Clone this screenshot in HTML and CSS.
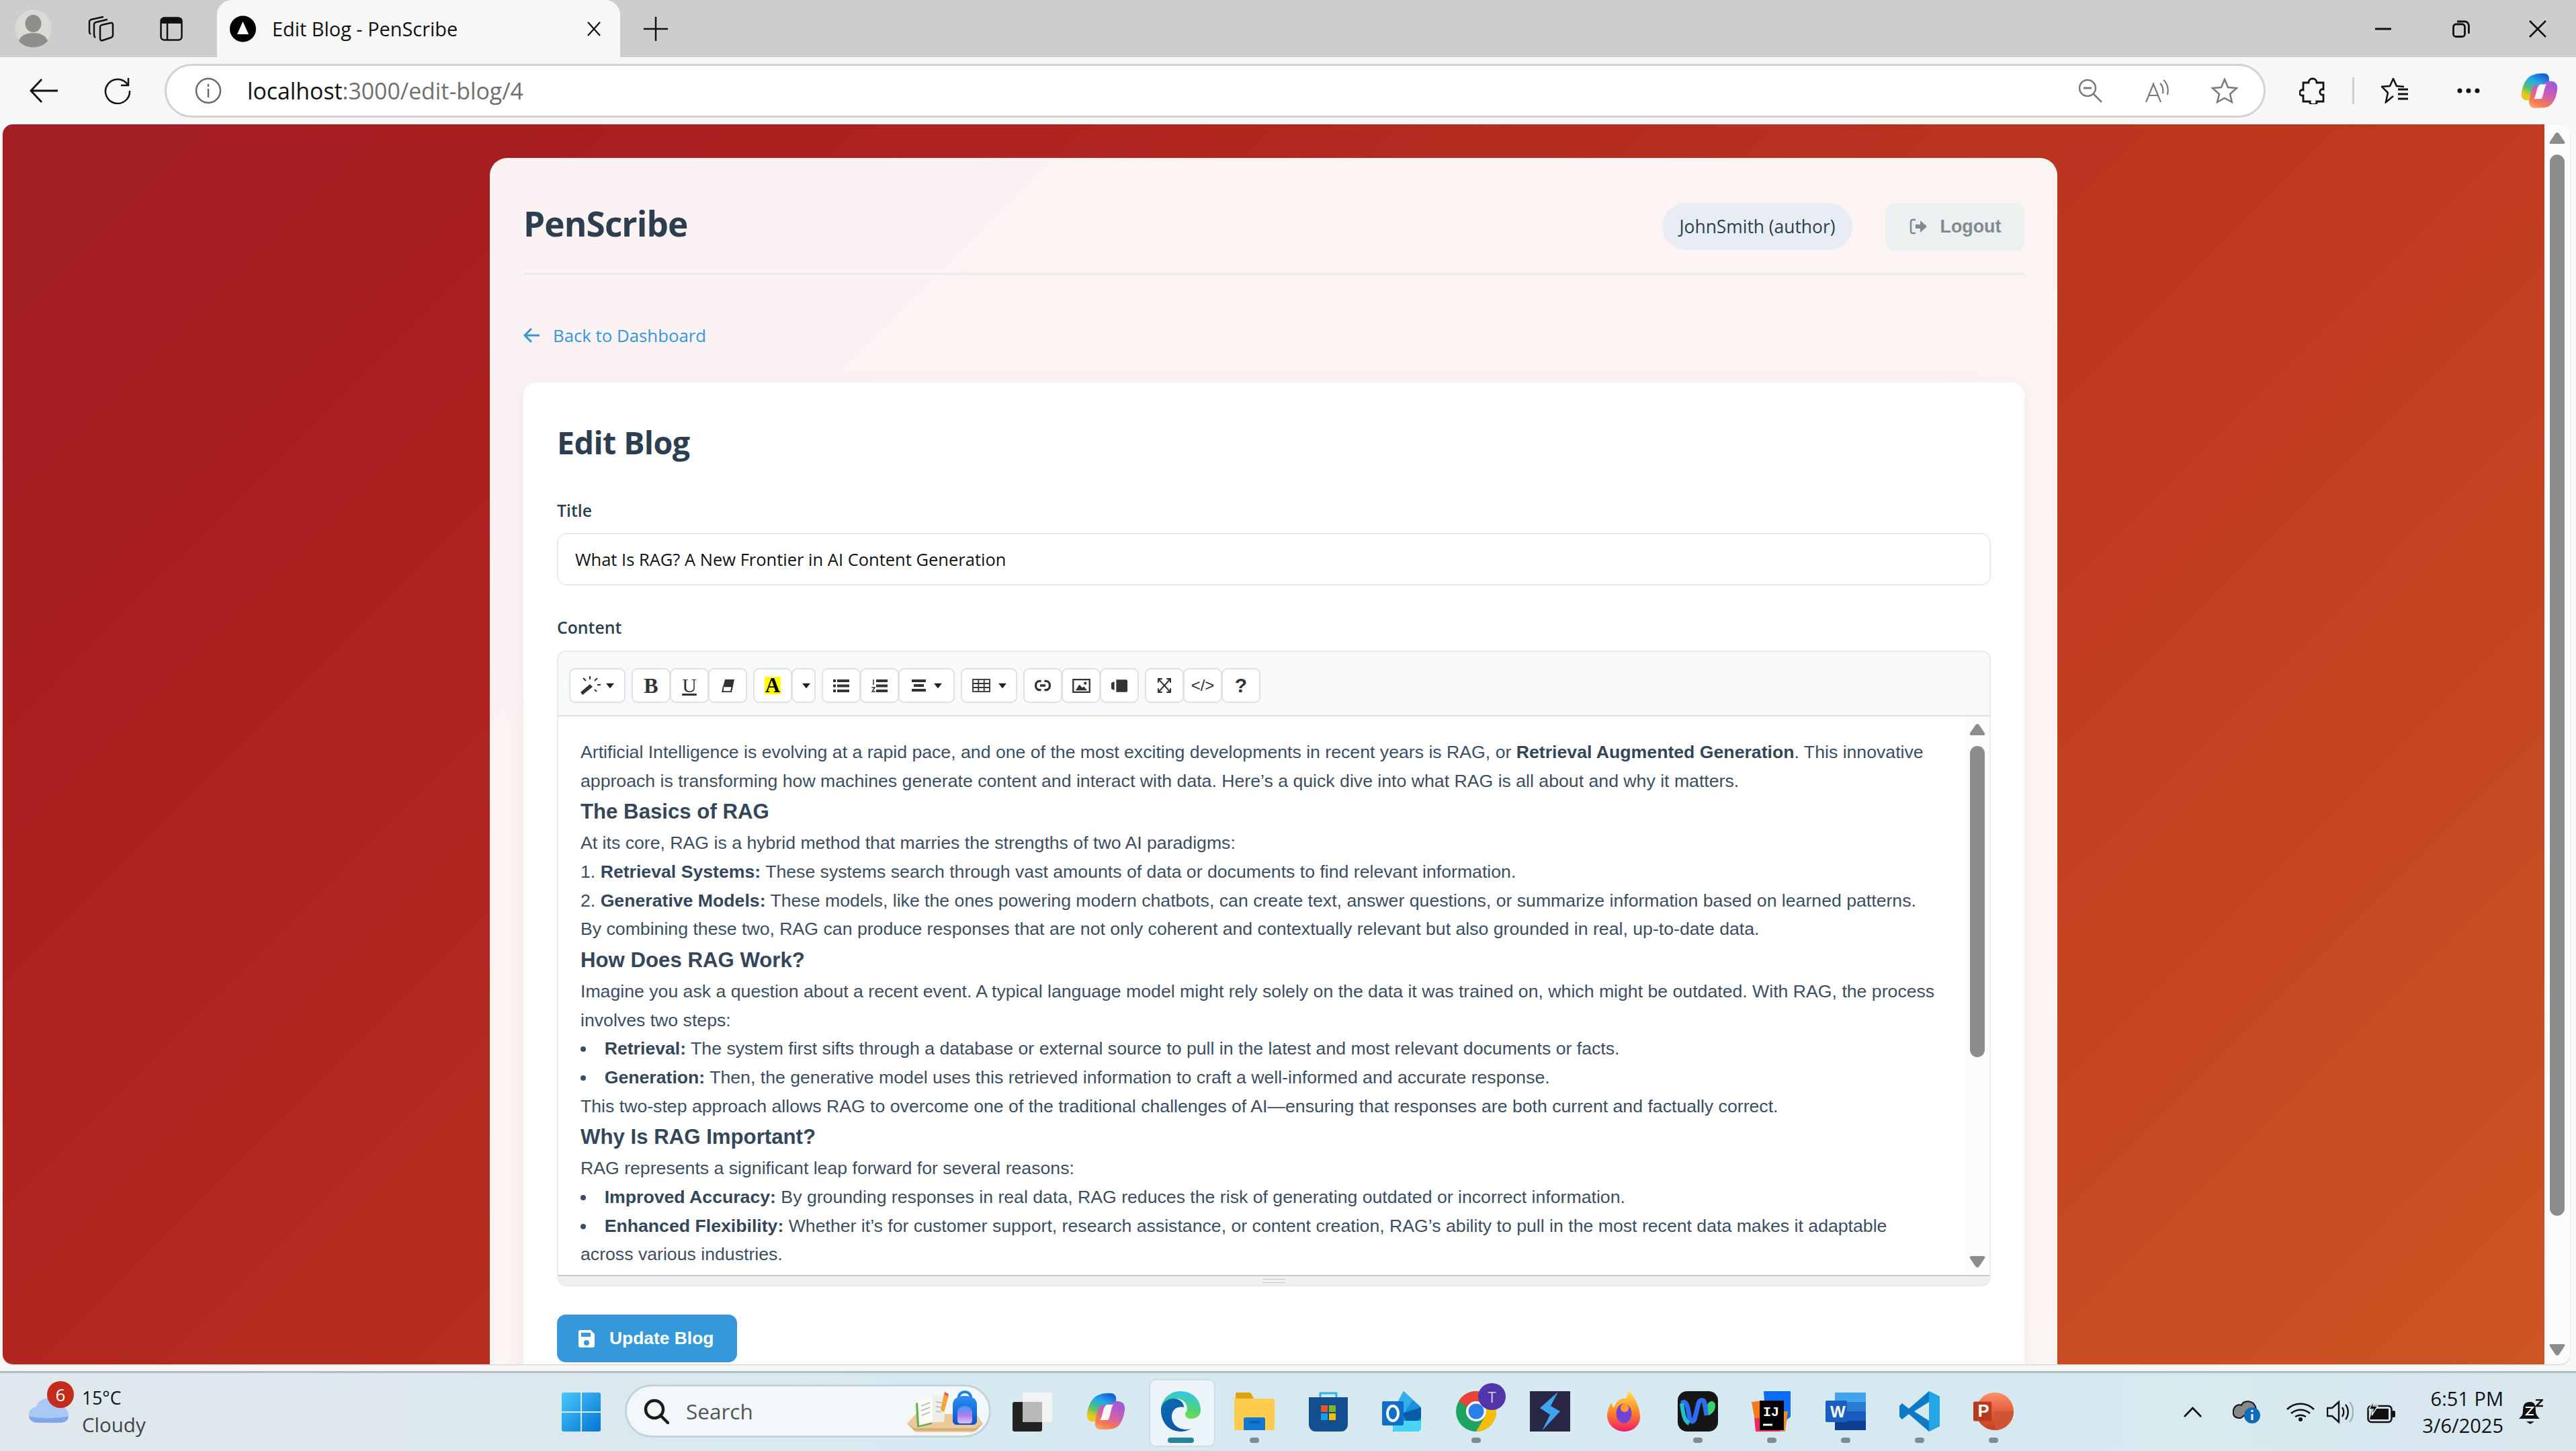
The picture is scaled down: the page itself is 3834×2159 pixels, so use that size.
FILE: index.html
```html
<!DOCTYPE html>
<html lang="en">
<head>
<meta charset="utf-8">
<title>Edit Blog - PenScribe</title>
<link rel="stylesheet" href="styles.css">
</head>
<body>
<svg class="defs" width="0" height="0" aria-hidden="true">
  <defs>
    <linearGradient id="cpA" x1="0.7" y1="0" x2="0.2" y2="1"><stop offset="0" stop-color="#1b5fd6"/><stop offset=".3" stop-color="#1fa9ea"/><stop offset=".62" stop-color="#58c26a"/><stop offset=".85" stop-color="#e8c81c"/><stop offset="1" stop-color="#e8c81c"/></linearGradient>
    <linearGradient id="cpB" x1="0.7" y1="0" x2="0.2" y2="1"><stop offset="0" stop-color="#9b5bd8"/><stop offset=".45" stop-color="#d05fb0"/><stop offset=".8" stop-color="#f57a50"/><stop offset="1" stop-color="#f8a060"/></linearGradient>
    <linearGradient id="edgeA" x1="0.8" y1="0.1" x2="0.6" y2="1"><stop offset="0" stop-color="#38c6e0"/><stop offset=".6" stop-color="#4cd277"/><stop offset="1" stop-color="#7bdc4a"/></linearGradient>
    <linearGradient id="edgeB" x1="0" y1="0" x2="1" y2="1"><stop offset="0" stop-color="#0b6db8"/><stop offset="1" stop-color="#0f4e9c"/></linearGradient>
    <linearGradient id="winG" x1="0" y1="0" x2="1" y2="1"><stop offset="0" stop-color="#46c8f8"/><stop offset="1" stop-color="#0574d4"/></linearGradient>
    <linearGradient id="fireG" x1="0.5" y1="0" x2="0.5" y2="1"><stop offset="0" stop-color="#ffe14a"/><stop offset=".5" stop-color="#ff8a26"/><stop offset="1" stop-color="#ee1d6a"/></linearGradient>
    <linearGradient id="ppG" x1="0" y1="0" x2="0" y2="1"><stop offset="0" stop-color="#ff8f6b"/><stop offset=".5" stop-color="#e0603a"/><stop offset="1" stop-color="#c4401f"/></linearGradient>
    <linearGradient id="packG" x1="0" y1="0" x2="0" y2="1"><stop offset="0" stop-color="#2b8cf2"/><stop offset="1" stop-color="#0a55c8"/></linearGradient>
    <linearGradient id="pocketG" x1="0" y1="0" x2="0" y2="1"><stop offset="0" stop-color="#3f9ef5"/><stop offset=".55" stop-color="#b07cf0"/><stop offset="1" stop-color="#e3c4f8"/></linearGradient>
    <symbol id="copilot" viewBox="0 0 60 54">
      <path d="M36 0c7 0 9 5 8 13l-4 19c-1 7-4 10-9 10H8c-5 0-8-5-7-12C3 18 8 5 20 2c5-2 10-2 16-2z" fill="url(#cpA)"/>
      <path d="M46 12c8 0 12 5 11 13-2 14-7 26-18 28-5 1-12 1-18 1-6 0-9-5-8-12l3-14c1-7 5-10 10-10 7-1 14-6 20-6z" fill="url(#cpB)"/>
      <path d="M30 17h10c-4 5-4 18-8 23H20c5-5 3-18 10-23z" fill="#f7f7f7"/>
    </symbol>
    <symbol id="tri-up" viewBox="0 0 24 18"><path d="M12 1c1 0 2 1 3 2l8 12c1 2 0 3-2 3H3c-2 0-3-1-2-3L9 3c1-1 2-2 3-2z" fill="#8c8c8c"/></symbol>
    <symbol id="tri-down" viewBox="0 0 24 18"><path d="M12 17c1 0 2-1 3-2l8-12c1-2 0-3-2-3H3C1 0 0 1 1 3l8 12c1 1 2 2 3 2z" fill="#8c8c8c"/></symbol>
    <symbol id="caret" viewBox="0 0 16 12"><path d="M0 1h16L8 11z" fill="#222"/></symbol>
  </defs>
</svg>

<div class="screen">
  <header class="tabbar">
    <svg class="ic-profile" viewBox="0 0 55 57"><ellipse cx="27.500" cy="28.500" rx="27" ry="28" fill="#dbdbd6"/><ellipse cx="27.500" cy="21" rx="12" ry="13" fill="#908e8b"/><path d="M6 47c3-9 12-12 21.500-12S46 38 49 47c-5 6-13 9.500-21.500 9.500S11 53 6 47z" fill="#908e8b"/></svg>
    <svg class="ic-coll" viewBox="0 0 40 40" fill="none" stroke="#111" stroke-width="2.500"><path d="M24 2 6 6c-3 .7-3 2-3 4v14c0 2 .5 3 2 4"/><path d="M30 6 13 10c-3 .7-3 2-3 4v15c0 2 .5 3 2 4"/><path d="M35 11 22 14c-3 .7-3 2-3 4v16c0 3 1.500 4 4 3l12-4c2-.7 3-2 3-4V14c0-2-1-3.500-3-3z"/></svg>
    <svg class="ic-tabs" viewBox="0 0 34 36"><rect x="1.500" y="1.500" width="31" height="33" rx="5" fill="none" stroke="#111" stroke-width="2.500"/><path d="M1.500 7c0-3 2-5.500 5-5.500h21c3 0 5 2.500 5 5.500v3h-31z" fill="#111"/><path d="M11 10v24" stroke="#111" stroke-width="2.500"/></svg>
    <div class="tab">
      <svg class="ic-fav" viewBox="0 0 39 40"><circle cx="19.500" cy="20" r="19.500" fill="#000"/><path d="M19.500 9 28 28H11z" fill="#fff"/></svg>
      <span class="tab-title">Edit Blog - PenScribe</span>
      <svg class="ic-x" viewBox="0 0 22 22"><path d="M2 1l18 20M20 1 2 21" stroke="#111" stroke-width="2.200"/></svg>
    </div>
    <svg class="ic-plus" viewBox="0 0 36 36"><path d="M18 0v36M0 18h36" stroke="#111" stroke-width="2.500"/></svg>
    <div class="winctrl">
      <svg class="ic-min" viewBox="0 0 24 4"><path d="M0 2h24" stroke="#111" stroke-width="3"/></svg>
      <svg class="ic-rest" viewBox="0 0 26 26" fill="none" stroke="#111" stroke-width="2.800"><rect x="1.500" y="6" width="17" height="18.500" rx="4"/><path d="M7 2h11c4 0 6.500 3 6.500 7v11"/></svg>
      <svg class="ic-close" viewBox="0 0 26 26"><path d="M1 1l24 24M25 1 1 25" stroke="#111" stroke-width="2.500"/></svg>
    </div>
  </header>

  <nav class="toolbar">
    <svg class="ic-back" viewBox="0 0 42 36" fill="none" stroke="#111" stroke-width="2.800"><path d="M42 18H2M18 1 2 18l16 17"/></svg>
    <svg class="ic-reload" viewBox="0 0 40 40" fill="none" stroke="#111" stroke-width="2.500"><path d="M35 11A18 18 0 1 0 38 20"/><path d="M36 1v11H25"/></svg>
    <div class="address">
      <svg class="ic-info" viewBox="0 0 40 40" fill="none" stroke="#6b6b6b" stroke-width="2.500"><circle cx="20" cy="20" r="18"/><path d="M20 17v13M20 10v4"/></svg>
      <span class="url"><span class="url-host">localhost</span>:3000/edit-blog/4</span>
      <div class="addr-right">
        <svg class="ic-zoom" viewBox="0 0 36 36" fill="none" stroke="#7a7a7a" stroke-width="2.500"><circle cx="14" cy="14" r="12"/><path d="M23 23l12 12"/><path d="M8 14h12" stroke-width="3"/></svg>
        <svg class="ic-read" viewBox="0 0 38 36" fill="none" stroke="#7a7a7a" stroke-width="2.200"><path d="M1 35 12 8l11 27M5 25h14"/><path d="M22 7c4 3 5 10 4 15M27 2c6 5 8 14 6 22"/></svg>
        <svg class="ic-star" viewBox="0 0 40 38" fill="none" stroke="#7a7a7a" stroke-width="2.500"><path d="M20 2l5 12 13 1-10 9 3 12-11-6-11 6 3-12-10-9 13-1z"/></svg>
      </div>
    </div>
    <svg class="ic-puzzle" viewBox="0 0 38 40" fill="none" stroke="#111" stroke-width="2.800"><path d="M14 8c0-8 12-8 12 0h10v10c-7-2-7 10 0 8v10H26c2 6-12 6-10 0H6V27c-7 2-7-10 0-8V8z"/></svg>
    <div class="tb-divider"></div>
    <svg class="ic-favs" viewBox="0 0 40 38" fill="none" stroke="#111" stroke-width="2.500"><path d="M34 13l-11-1-5-11-5 11-12 1 9 9-3 14 11-9"/><path d="M25 17h15M25 24h15M25 31h15" stroke-width="3"/></svg>
    <svg class="ic-dots" viewBox="0 0 34 8"><circle cx="4" cy="4" r="3.500" fill="#111"/><circle cx="17" cy="4" r="3.500" fill="#111"/><circle cx="30" cy="4" r="3.500" fill="#111"/></svg>
    <svg class="ic-copilot"><use href="#copilot"/></svg>
  </nav>

  <div class="viewport">
    <div class="frame">
      <main class="page">
        <section class="card">
          <header class="app-header">
            <h1 class="brand">PenScribe</h1>
            <div class="user-nav">
              <span class="pill">JohnSmith (author)</span>
              <button class="logout" type="button">
                <svg class="ic-logout" viewBox="0 0 26 26"><path d="M9 3H5C3 3 2 4 2 6v14c0 2 1 3 3 3h4" fill="none" stroke="#7f8c8d" stroke-width="2.500"/><path d="M9 10h7V4l10 9-10 9v-6H9z" fill="#7f8c8d"/></svg>
                <span>Logout</span>
              </button>
            </div>
          </header>

          <a class="back" href="#">
            <svg class="ic-arrow" viewBox="0 0 24 22" fill="none" stroke="#3498db" stroke-width="3"><path d="M24 11H3M12 1 2 11l10 10"/></svg>
            <span>Back to Dashboard</span>
          </a>

          <div class="panel">
            <h2 class="panel-title">Edit Blog</h2>
            <label class="field-label first">Title</label>
            <div class="input">What Is RAG? A New Frontier in AI Content Generation</div>
            <label class="field-label second">Content</label>

            <div class="editor">
              <div class="ed-toolbar">
                <div class="btn-group">
                  <div class="tbtn wide">
                    <svg class="ti ti-wand" viewBox="0 0 30 28"><path d="M0 24 14 12l4 4L3 28z" fill="#333"/><path d="M14 0v5M4 3l4 4M25 3l-4 4M25 13h5M24 23l-3-3" stroke="#333" stroke-width="2" fill="none"/></svg>
                    <svg class="caret"><use href="#caret"/></svg>
                  </div>
                </div>
                <div class="btn-group">
                  <div class="tbtn glyph">B</div>
                  <div class="tbtn glyph under">U</div>
                  <div class="tbtn"><svg class="ti ti-eraser" viewBox="0 0 19 19"><path d="M5 0h14l-4 19H0z" fill="#333"/><path d="M2.500 10.500h13l-1.800 7.500H2z" fill="#fff" stroke="#333" stroke-width="1.500"/></svg></div>
                </div>
                <div class="btn-group">
                  <div class="tbtn"><span class="hilite">A</span></div>
                  <div class="tbtn narrow"><svg class="caret"><use href="#caret"/></svg></div>
                </div>
                <div class="btn-group">
                  <div class="tbtn"><svg class="ti ti-list" viewBox="0 0 24 19"><path d="M0 0h4v4H0zM6 0h18v4H6zM0 7.500h4v4H0zM6 7.500h18v4H6zM0 15h4v4H0zM6 15h18v4H6z" fill="#333"/></svg></div>
                  <div class="tbtn"><svg class="ti ti-list" viewBox="0 0 24 19"><path d="M7 0h17v4H7zM7 7.500h17v4H7zM7 15h17v4H7z" fill="#333"/><path d="M3 0v8M.5 12h4.500L1 18h5" stroke="#333" stroke-width="1.500" fill="none"/></svg></div>
                  <div class="tbtn wide spaced"><svg class="ti ti-align" viewBox="0 0 21 18"><path d="M0 0h21v4H0zM3 7h15v4H3zM0 14h21v4H0z" fill="#333"/></svg><svg class="caret"><use href="#caret"/></svg></div>
                </div>
                <div class="btn-group">
                  <div class="tbtn wide spaced"><svg class="ti ti-table" viewBox="0 0 27 20" fill="none" stroke="#333" stroke-width="1.800"><rect x="1" y="1" width="25" height="18"/><path d="M9.300 1v18M17.700 1v18M1 7h25M1 13h25"/></svg><svg class="caret"><use href="#caret"/></svg></div>
                </div>
                <div class="btn-group">
                  <div class="tbtn"><svg class="ti ti-link" viewBox="0 0 28 22" fill="none" stroke="#333" stroke-width="4"><path d="M11 3H8C-1 3-1 19 8 19h3M17 3h3c9 0 9 16 0 16h-3M9 11h10"/></svg></div>
                  <div class="tbtn"><svg class="ti ti-pic" viewBox="0 0 28 22"><rect x="1.200" y="1.200" width="25.600" height="19.600" fill="none" stroke="#333" stroke-width="2.400"/><path d="M5 18l6-9 4 5 3-2 5 6z" fill="#333"/><circle cx="20" cy="7" r="2.200" fill="#333"/></svg></div>
                  <div class="tbtn"><svg class="ti ti-vid" viewBox="0 0 26 20"><path d="M8 0h16c1 0 2 1 2 2v16c0 1-1 2-2 2H8zM0 5l5-2v14l-5-2z" fill="#333"/></svg></div>
                </div>
                <div class="btn-group">
                  <div class="tbtn"><svg class="ti ti-full" viewBox="0 0 24 26" fill="none" stroke="#333" stroke-width="2.500"><path d="M2 2l20 22M22 2 2 24"/><path d="M1 8V1h7M16 1h7v7M1 18v7h7M16 25h7v-7" stroke-width="2.800"/></svg></div>
                  <div class="tbtn glyph code">&lt;/&gt;</div>
                  <div class="tbtn glyph help">?</div>
                </div>
              </div>

              <div class="ed-body">
                <div class="ed-text">
                  <p>Artificial Intelligence is evolving at a rapid pace, and one of the most exciting developments in recent years is RAG, or <strong>Retrieval Augmented Generation</strong>. This innovative approach is transforming how machines generate content and interact with data. Here’s a quick dive into what RAG is all about and why it matters.</p>
                  <h3>The Basics of RAG</h3>
                  <p>At its core, RAG is a hybrid method that marries the strengths of two AI paradigms:</p>
                  <p>1. <strong>Retrieval Systems:</strong> These systems search through vast amounts of data or documents to find relevant information.</p>
                  <p>2. <strong>Generative Models:</strong> These models, like the ones powering modern chatbots, can create text, answer questions, or summarize information based on learned patterns.</p>
                  <p>By combining these two, RAG can produce responses that are not only coherent and contextually relevant but also grounded in real, up-to-date data.</p>
                  <h3>How Does RAG Work?</h3>
                  <p>Imagine you ask a question about a recent event. A typical language model might rely solely on the data it was trained on, which might be outdated. With RAG, the process involves two steps:</p>
                  <ul>
                    <li><strong>Retrieval:</strong> The system first sifts through a database or external source to pull in the latest and most relevant documents or facts.</li>
                    <li><strong>Generation:</strong> Then, the generative model uses this retrieved information to craft a well-informed and accurate response.</li>
                  </ul>
                  <p>This two-step approach allows RAG to overcome one of the traditional challenges of AI—ensuring that responses are both current and factually correct.</p>
                  <h3>Why Is RAG Important?</h3>
                  <p>RAG represents a significant leap forward for several reasons:</p>
                  <ul>
                    <li><strong>Improved Accuracy:</strong> By grounding responses in real data, RAG reduces the risk of generating outdated or incorrect information.</li>
                    <li><strong>Enhanced Flexibility:</strong> Whether it’s for customer support, research assistance, or content creation, RAG’s ability to pull in the most recent data makes it adaptable across various industries.</li>
                  </ul>
                </div>
                <div class="ed-scroll">
                  <svg class="arrow"><use href="#tri-up"/></svg>
                  <div class="ed-thumb"></div>
                  <svg class="arrow push"><use href="#tri-down"/></svg>
                </div>
              </div>
              <div class="ed-status"><span class="grip"></span></div>
            </div>

            <button class="submit" type="button">
              <svg class="ic-save" viewBox="0 0 24 26"><path d="M3 0h15l6 6v17c0 2-1 3-3 3H3c-2 0-3-1-3-3V3c0-2 1-3 3-3zm1 4v6h14V4zm8 11a4 4 0 1 0 0 8 4 4 0 0 0 0-8z" fill="#fff" fill-rule="evenodd"/></svg>
              <span>Update Blog</span>
            </button>
          </div>
        </section>
      </main>
      <aside class="page-scroll">
        <svg class="arrow"><use href="#tri-up"/></svg>
        <div class="page-thumb"></div>
        <svg class="arrow push"><use href="#tri-down"/></svg>
      </aside>
    </div>
  </div>

  <footer class="taskbar">
    <div class="weather">
      <svg class="ic-cloud" viewBox="0 0 59 37"><path d="M14 37C5 37 0 32 0 25s5-11 11-12C13 5 22 0 31 0c10 0 18 6 20 14 5 2 8 6 8 11 0 7-5 12-13 12z" fill="#a9c8f4"/><path d="M14 37C5 37 0 32 0 27c10 4 46 4 59 0 0 6-5 10-13 10z" fill="#7ea8ea"/></svg>
      <span class="badge">6</span>
      <div class="w-text"><span class="w-temp">15°C</span><span class="w-desc">Cloudy</span></div>
    </div>
    <svg class="ic-win" viewBox="0 0 58 58"><g fill="url(#winG)"><path d="M3 0h25v28H0V3c0-2 1-3 3-3zM30 0h25c2 0 3 1 3 3v25H30zM0 30h28v28H3c-2 0-3-1-3-3zM30 30h28v25c0 2-1 3-3 3H30z"/></g></svg>
    <div class="search">
      <svg class="ic-search" viewBox="0 0 38 38" fill="none" stroke="#1c1c1c" stroke-width="4.500"><circle cx="16" cy="16" r="13"/><path d="M25 25l11 11" stroke-linecap="round"/></svg>
      <span class="search-text">Search</span>
      <svg class="ic-book" viewBox="0 0 115 63">
        <path d="M1 50 14 36h90l10 14-11 11-3 2H14l-2-2z" fill="#ecc99b"/>
        <path d="M12 61l-11-11 11 7h90l12-7-11 11z" fill="#d8ae78"/>
        <path d="M14 20 38 13v38L16 56z" fill="#62b04f"/>
        <path d="M17 18 39 8v40L19 53z" fill="#fbfbf6"/>
        <path d="M39 8l20 2-3 38-17 0z" fill="#eeeeea"/>
        <path d="M22 24l13-5M22 31l13-5M23 38l12-5M44 18l9 1M44 25l9 1M44 32l8 1" stroke="#b5b5b5" stroke-width="1.500"/>
        <path d="M56 6l7 3-7 24-5-3z" fill="#f5a33a"/>
        <path d="M57 3l6 3-1 4-6-3z" fill="#f06050"/>
        <path d="M78 12c0-12 18-12 18 0" fill="none" stroke="#1f7fe8" stroke-width="4"/>
        <path d="M69 22c0-8 7-13 18-13s18 5 18 13v24c0 4-3 6-7 6H76c-4 0-7-2-7-6z" fill="url(#packG)"/>
        <path d="M76 34c0-6 5-10 11-10s11 4 11 10v12c0 2-2 4-4 4H80c-2 0-4-2-4-4z" fill="url(#pocketG)"/>
      </svg>
    </div>
    <div class="apps">
      <div class="app">
        <span class="app-ic"><svg viewBox="0 0 60 60"><rect x="0" y="16" width="44" height="44" rx="3" fill="#222"/><rect x="15" y="2" width="44" height="44" rx="3" fill="#f4f4f4" fill-opacity=".92"/><rect x="15" y="16" width="29" height="30" fill="#b9b9b9"/></svg></span>
      </div>
      <div class="app">
        <span class="app-ic"><svg><use href="#copilot"/></svg></span>
      </div>
      <div class="app current">
        <span class="app-ic"><svg viewBox="0 0 60 60"><path d="M30 0c17 0 30 12 30 28 0 9-7 13-14 13-6 0-9-3-9-7 0-3 3-3 3-8 0-9-8-16-18-15C10 12 2 22 1 26 3 10 15 0 30 0z" fill="url(#edgeA)"/><path d="M1 26c1-9 10-15 19-15 9 0 15 6 15 13-10-2-18 3-18 14 0 10 8 19 22 19 3 0 6-1 8-2-6 4-12 5-17 5C13 60 0 46 1 26z" fill="url(#edgeB)"/></svg></span>
        <span class="ind active"></span>
      </div>
      <div class="app">
        <span class="app-ic"><svg viewBox="0 0 60 56"><path d="M2 2c0-1 1-2 2-2h18c2 0 3 1 4 3l3 6H2z" fill="#e2a10e"/><path d="M0 9h57c2 0 3 1 3 3v42c0 1-1 2-2 2H2c-1 0-2-1-2-2z" fill="#ffcc4d"/><path d="M14 40c0-2 1-3 3-3h26c2 0 3 1 3 3v16H14z" fill="#1177cf"/><path d="M22 44h16" stroke="#0c5fa8" stroke-width="3"/></svg></span>
        <span class="ind"></span>
      </div>
      <div class="app">
        <span class="app-ic"><svg viewBox="0 0 58 60"><path d="M17 11V3h24v8" fill="none" stroke="#2fb3e6" stroke-width="3"/><path d="M0 9h58v40c0 6-4 11-10 11H10C4 60 0 55 0 49z" fill="#134f8f"/><rect x="18" y="21" width="10" height="10" fill="#e8552c"/><rect x="30" y="21" width="10" height="10" fill="#7db727"/><rect x="18" y="33" width="10" height="10" fill="#13a0e5"/><rect x="30" y="33" width="10" height="10" fill="#ffbb0c"/></svg></span>
      </div>
      <div class="app">
        <span class="app-ic"><svg viewBox="0 0 60 60"><path d="M32 0l26 24v30c0 3-3 6-6 6H16V30z" fill="#1a8fdb"/><path d="M32 0l14 13-14 20-16-3z" fill="#2fb0ea"/><path d="M58 24v16L40 52 30 33z" fill="#0a5ca8"/><path d="M16 44h42v10c0 3-3 6-6 6H19c-2 0-3-1-3-3z" fill="#48d5f5"/><rect x="0" y="15" width="32" height="36" rx="2" fill="#0f6fc6"/><ellipse cx="16" cy="33" rx="8" ry="11" fill="none" stroke="#fff" stroke-width="4"/></svg></span>
      </div>
      <div class="app">
        <span class="app-ic chrome"><svg viewBox="0 0 60 60"><circle cx="30" cy="30" r="30" fill="#1ea362"/><path d="M30 0a30 30 0 0 1 26 15H30a15 15 0 0 0-13 8L4 15A30 30 0 0 1 30 0z" fill="#ea4335"/><path d="M56 15a30 30 0 0 1-26 45l13-22a15 15 0 0 0 0-15z" fill="#fbbc04"/><circle cx="30" cy="30" r="15" fill="#fff"/><circle cx="30" cy="30" r="11.500" fill="#2b7de9"/></svg>
          <span class="teams">T</span>
        </span>
        <span class="ind"></span>
      </div>
      <div class="app">
        <span class="app-ic"><svg viewBox="0 0 60 60"><rect width="60" height="60" fill="#2a2646"/><path d="M42 1 15 25l15 10-12 24 27-29-14-8z" fill="#3fa3ee"/></svg></span>
      </div>
      <div class="app">
        <span class="app-ic"><svg viewBox="0 0 56 58"><path d="M36 0c8 10 14 22 15 34 2 14-9 24-23 24S2 46 4 32c1-6 3-12 6-16 0 4 2 6 4 8 2-10 10-14 18-14 0-4 1-7 4-10z" fill="url(#fireG)"/><ellipse cx="28" cy="32" rx="11" ry="14" fill="#7542d4"/><circle cx="29" cy="24" r="6" fill="#ff9a2a"/></svg></span>
      </div>
      <div class="app">
        <span class="app-ic"><svg viewBox="0 0 60 60"><rect width="60" height="60" rx="14" fill="#161616"/><path d="M6 18c6-6 9 4 11 18 1 8 5 12 8 6l6-24c2-6 8-6 9 0l3 18" fill="none" stroke="#2d6ef5" stroke-width="7"/><path d="M6 18c2 14 3 26 11 30" fill="none" stroke="#22c1c9" stroke-width="6"/><path d="M44 20c4-8 12-6 12 2s-6 12-10 14z" fill="#37d16e"/></svg></span>
        <span class="ind"></span>
      </div>
      <div class="app">
        <span class="app-ic"><svg viewBox="0 0 60 60"><path d="M0 16 16 14v46H8z" fill="#f97a14"/><path d="M18 0h40v38L36 56H22z" fill="#0a6cf2"/><path d="M4 40h28L44 60H6z" fill="#f3275f"/><path d="M44 30h10l-4 30H44z" fill="#f98c14"/><rect x="12" y="14" width="36" height="44" fill="#000"/><text class="ij" x="17" y="37">IJ</text><path d="M17 50h14" stroke="#fff" stroke-width="3"/></svg></span>
        <span class="ind"></span>
      </div>
      <div class="app">
        <span class="app-ic"><svg viewBox="0 0 60 56"><rect x="14" y="0" width="46" height="14" fill="#41a5ee"/><rect x="14" y="14" width="46" height="14" fill="#2b7cd3"/><rect x="14" y="28" width="46" height="14" fill="#185abd"/><rect x="14" y="42" width="46" height="14" fill="#103f91"/><rect x="0" y="12" width="32" height="32" rx="2" fill="#1a5fc0"/><text class="wd" x="7" y="37">W</text></svg></span>
        <span class="ind"></span>
      </div>
      <div class="app">
        <span class="app-ic"><svg viewBox="0 0 60 60"><path d="M44 0l16 8v44L44 60 14 34 4 42 0 38V22l4-4 10 8z" fill="#0e79c4"/><path d="M44 0l16 8v44L44 60z" fill="#23a5ea"/><path d="M44 16 22 30l22 14z" fill="#d7e9f0"/></svg></span>
        <span class="ind"></span>
      </div>
      <div class="app">
        <span class="app-ic"><svg viewBox="0 0 62 58"><circle cx="33" cy="29" r="29" fill="url(#ppG)"/><path d="M33 29h29c0 16-13 29-29 29z" fill="#cf5434"/><rect x="0" y="14" width="28" height="30" rx="2" fill="#b83c1c"/><text class="pp" x="7" y="37">P</text></svg></span>
        <span class="ind"></span>
      </div>
    </div>
    <div class="tray">
      <svg class="t-caret" viewBox="0 0 27 16" fill="none" stroke="#111" stroke-width="2.600"><path d="M1 15 13.500 2 26 15"/></svg>
      <svg class="t-cloud" viewBox="0 0 42 36"><path d="M9 27C2 26 0 22 1 16 2 8 10 6 13 8c3-8 17-8 21 2 1 3 1 6 1 8H24L12 27z" fill="#888" stroke="#111" stroke-width="2"/><circle cx="29" cy="23" r="12" fill="#0f6cbd"/><path d="M29 21v9M29 15v3" stroke="#fff" stroke-width="3"/></svg>
      <svg class="t-wifi" viewBox="0 0 42 28" fill="none" stroke="#111" stroke-width="2.600"><path d="M1 10C12-1 30-1 41 10M7 16c8-7 20-7 28 0M13 21c5-3 11-3 16 0"/><circle cx="21" cy="25" r="3" fill="#111" stroke="none"/></svg>
      <svg class="t-vol" viewBox="0 0 40 36" fill="none" stroke="#111" stroke-width="2.400"><path d="M1 12h7L18 3v30L8 24H1zM23 11c3 4 3 10 0 14M28 7c5 6 5 16 0 22"/><path d="M34 3c7 8 7 22 0 30" stroke="#9fb1bb"/></svg>
      <svg class="t-batt" viewBox="0 0 42 34"><rect x="1.500" y="8" width="35" height="24" rx="5" fill="none" stroke="#111" stroke-width="2.500"/><path d="M8 12h24v16H4z" fill="#111"/><rect x="37" y="15" width="5" height="10" rx="2" fill="#111"/><path d="M10 0 3 13h6l-2 9 9-14H9z" fill="#111" stroke="#d7e9f0" stroke-width="1.500"/></svg>
      <div class="clock"><span>6:51 PM</span><span>3/6/2025</span></div>
      <svg class="t-bell" viewBox="0 0 37 38"><path d="M18 4C8 4 7 10 7 18c0 5-2 7-6 11h31c-4-4-6-7-6-11 0-8-1-14-8-14z" fill="#111"/><path d="M12 33h12l-6 4z" fill="#111"/><path d="M11 12h11l-10 11h11" fill="none" stroke="#fff" stroke-width="2"/><path d="M26 1h10l-9 9h10" fill="none" stroke="#111" stroke-width="2.500"/></svg>
    </div>
  </footer>
</div>
</body>
</html>
```
FILE: styles.css
```css
* { box-sizing: border-box; }
html, body { margin: 0; padding: 0; height: 100%; overflow: hidden; }
body { font-family: "Open Sans", "Noto Sans", sans-serif; color: #111; background: #f7f7f7; }
svg { display: block; flex: none; }
.defs { position: absolute; }
.screen { width: 3834px; height: 2159px; display: flex; flex-direction: column; overflow: hidden; }

/* ---------- browser chrome ---------- */
.tabbar { height: 85px; background: #cdcdcd; display: flex; align-items: center; flex: none; }
.ic-profile { width: 55px; height: 57px; margin-left: 22px; }
.ic-coll { width: 40px; height: 40px; margin-left: 53px; }
.ic-tabs { width: 34px; height: 36px; margin-left: 68px; }
.tab { width: 600px; height: 85px; margin-left: 51px; background: #f7f7f7; border-radius: 22px 22px 0 0; display: flex; align-items: center; padding: 0 28px 0 19px; }
.ic-fav { width: 39px; height: 40px; }
.tab-title { font-size: 28.900px; margin-left: 24px; color: #111; flex: 1; white-space: nowrap; }
.ic-x { width: 22px; height: 22px; }
.ic-plus { width: 36px; height: 36px; margin-left: 35px; }
.winctrl { margin-left: auto; display: flex; align-items: center; padding-right: 44px; }
.ic-min { width: 24px; height: 4px; }
.ic-rest { width: 26px; height: 26px; margin-left: 91px; }
.ic-close { width: 26px; height: 26px; margin-left: 88px; }

.toolbar { height: 100px; background: #f7f7f7; display: flex; align-items: center; flex: none; }
.ic-back { width: 42px; height: 36px; margin-left: 44px; }
.ic-reload { width: 40px; height: 40px; margin-left: 69px; }
.address { width: 3127px; height: 80px; margin-left: 50px; background: #fff; border: 3px solid #d2d2d2; border-radius: 40px; display: flex; align-items: center; padding: 0 38px 0 42px; }
.ic-info { width: 40px; height: 40px; }
.url { font-size: 33.800px; margin-left: 38px; color: #6f6f6f; }
.url-host { color: #111; }
.addr-right { margin-left: auto; display: flex; align-items: center; }
.ic-zoom { width: 36px; height: 36px; }
.ic-read { width: 38px; height: 36px; margin-left: 64px; }
.ic-star { width: 40px; height: 38px; margin-left: 60px; }
.ic-puzzle { width: 38px; height: 40px; margin-left: 50px; }
.tb-divider { width: 3px; height: 40px; background: #cfcfcf; margin-left: 41px; }
.ic-favs { width: 40px; height: 38px; margin-left: 40px; }
.ic-dots { width: 34px; height: 8px; margin-left: 73px; }
.ic-copilot { width: 57px; height: 52px; margin-left: 61px; }

/* ---------- viewport ---------- */
.viewport { height: 1855px; flex: none; padding: 0 9px 10px 4px; background: #f7f7f7; }
.frame { height: 1845px; display: flex; border-radius: 15px; overflow: hidden; box-shadow: 0 1px 2px rgba(0,0,0,.18); }
.page { flex: 1; min-width: 0; overflow: hidden; padding-top: 50px; background: linear-gradient(135deg, #a21f24 0%, #ab1f1f 20%, #c13c20 68%, #cc5523 100%); }
.page-scroll { width: 38px; flex: none; background: #fbfbfb; display: flex; flex-direction: column; align-items: center; padding: 11px 0 12px; }
.arrow { width: 24px; height: 18px; }
.arrow.push { margin-top: auto; }
.page-thumb { width: 22px; height: 1579px; margin-top: 16px; border-radius: 11px; background: #8c8c8c; }

.card { width: 2333px; margin: 0 auto; padding: 67px 49px 100px 50px; background: rgba(255,255,255,.95); border-radius: 26px 26px 0 0; }
.app-header { height: 107px; padding-bottom: 34px; border-bottom: 3px solid #ececec; display: flex; align-items: center; justify-content: space-between; }
.brand { margin: -11px 0 0; font-size: 51.300px; font-weight: 700; color: #2c3e50; letter-spacing: -.9px; line-height: 60px; }
.user-nav { display: flex; align-items: center; gap: 50px; }
.pill { width: 283px; height: 70px; border-radius: 35px; background: #e8ecf3; color: #2c3e50; font-size: 26.400px; display: flex; align-items: center; justify-content: center; white-space: nowrap; }
.logout { width: 206px; height: 71px; border: 0; border-radius: 14px; background: #ecf0f1; color: #7f8c8d; font: 700 26.800px "Liberation Sans", sans-serif; display: flex; align-items: center; justify-content: center; gap: 20px; padding: 0; }
.ic-logout { width: 26px; height: 26px; }

.back { margin-top: 70px; height: 40px; display: flex; align-items: center; color: #3498db; text-decoration: none; font-size: 25.800px; }
.ic-arrow { width: 24px; height: 22px; margin-right: 20px; }

.panel { margin-top: 50px; background: #fff; border-radius: 20px; padding: 64px 50px 120px; box-shadow: 0 4px 30px rgba(0,0,0,.05); }
.panel-title { margin: 0; height: 50px; font-size: 46.600px; line-height: 50px; font-weight: 700; color: #2c3e50; letter-spacing: -.6px; }
.field-label { display: block; height: 40px; line-height: 40px; font-size: 24.800px; font-weight: 600; color: #2c3e50; }
.field-label.first { margin-top: 56px; }
.field-label.second { margin-top: 42px; }
.input { margin-top: 14px; height: 78px; border: 2px solid #e9ecef; border-radius: 14px; padding: 0 25px; display: flex; align-items: center; font-size: 25.500px; color: #111; background: #fff; }

.editor { margin-top: 15px; height: 946px; border: 2px solid #e9ecef; border-radius: 14px; overflow: hidden; display: flex; flex-direction: column; }
.ed-toolbar { height: 96px; flex: none; background: #f8f9fa; border-bottom: 2px solid #dee2e6; display: flex; align-items: flex-start; gap: 9px; padding: 24px 16px 0; }
.btn-group { display: flex; }
.tbtn { width: 58px; height: 52px; margin-left: -1px; background: #fff; border: 2px solid #dde2e8; border-radius: 9px; display: flex; align-items: center; justify-content: center; gap: 8px; color: #333; }
.btn-group .tbtn:first-child { margin-left: 0; }
.tbtn.wide { width: 84px; }
.tbtn.spaced { gap: 12px; }
.tbtn.narrow { width: 36px; padding-left: 8px; }
.glyph { font: 700 32px "Liberation Serif", serif; }
.under { text-decoration: underline; font-weight: 400; font-size: 30px; }
.code { font: 400 24px "Liberation Sans", sans-serif; }
.help { font: 700 30px "Liberation Sans", sans-serif; }
.hilite { background: #ff0; color: #000; font: 700 31px/26px "Liberation Serif", serif; width: 24px; text-align: center; height: 26px; }
.caret { width: 12px; height: 9px; }
.ti { width: 24px; height: 24px; }
.ti-wand { width: 30px; height: 28px; }
.ti-list { width: 24px; height: 19px; }
.ti-align { width: 21px; height: 18px; }
.ti-table { width: 27px; height: 20px; }
.ti-link { width: 26px; height: 18px; }
.ti-pic { width: 27px; height: 21px; }
.ti-vid { width: 24px; height: 19px; }
.ti-eraser { width: 19px; height: 19px; }
.ti-full { width: 20px; height: 22px; }

.ed-body { flex: 1; min-height: 0; display: flex; overflow: hidden; background: #fff; }
.ed-text { flex: 1; min-width: 0; padding: 32px 36px 0 33px; font: 400 26.660px/42.650px "Liberation Sans", Arial, sans-serif; color: #3c4e62; overflow: hidden; }
.ed-text p { margin: 0; }
.ed-text strong { color: #34465a; }
.ed-text h3 { margin: 0; font-size: 31.200px; line-height: 50px; font-weight: 700; color: #34465a; }
.ed-text ul { margin: 0; padding: 0; list-style: disc inside; }
.ed-scroll { width: 37px; flex: none; background: #fbfbfb; display: flex; flex-direction: column; align-items: center; padding: 10px 0 10px; }
.ed-thumb { width: 22px; height: 463px; margin-top: 16px; border-radius: 11px; background: #8c8c8c; }
.ed-status { height: 15px; flex: none; background: #f0f0f0; border-top: 2px solid #c8c8c8; display: flex; justify-content: center; align-items: center; }
.grip { width: 34px; height: 6px; border-top: 1px solid #c8c8c8; border-bottom: 1px solid #c8c8c8; }

.submit { margin-top: 42px; width: 268px; height: 71px; border: 0; border-radius: 13px; background: #3498db; color: #fff; font: 700 26.400px "Liberation Sans", sans-serif; display: flex; align-items: center; gap: 22px; padding: 0 0 0 32px; }
.ic-save { width: 24px; height: 26px; }

/* ---------- taskbar ---------- */
.taskbar { height: 119px; flex: none; border-top: 3px solid #b0bcc0; background: linear-gradient(90deg, #e0e8ed 0%, #d7e9f0 35%, #d7e9f0 80%, #d9e7ef 100%); display: flex; align-items: flex-start; }
.weather { width: 836px; height: 116px; flex: none; position: relative; display: flex; padding-left: 43px; }
.ic-cloud { width: 59px; height: 37px; margin-top: 37px; }
.badge { position: absolute; left: 70px; top: 12px; width: 40px; height: 40px; border-radius: 50%; background: #c42b1c; color: #fff; font-size: 26px; line-height: 40px; text-align: center; }
.w-text { display: flex; flex-direction: column; margin-left: 20px; padding-top: 17px; font-size: 26.500px; line-height: 40px; }
.w-temp { color: #111; }
.w-desc { color: #444; font-size: 29.500px; }
.ic-win { width: 58px; height: 58px; margin-top: 29px; }
.search { width: 545px; height: 79px; margin: 17px 0 0 36px; border: 3px solid #c3d3da; border-radius: 40px; background: #f2f7fa; display: flex; align-items: center; padding: 0 8px 0 25px; }
.ic-search { width: 38px; height: 38px; }
.search-text { font-size: 31.500px; color: #555; margin-left: 25px; }
.ic-book { width: 115px; height: 63px; margin-left: auto; }
.apps { display: flex; margin-left: 7px; }
.app { width: 110px; height: 116px; display: flex; flex-direction: column; align-items: center; padding-top: 27px; position: relative; }
.app.current::before { content: ""; position: absolute; left: 8px; top: 9px; width: 95px; height: 97px; background: #ecf4fa; border: 2px solid #cfdde3; border-radius: 10px; }
.app-ic { width: 60px; height: 60px; position: relative; display: flex; align-items: center; justify-content: center; }
.app-ic svg { width: 60px; height: 60px; }
.ind { width: 14px; height: 8px; margin-top: 9px; border-radius: 4px; background: #7f8c92; position: relative; }
.ind.active { width: 39px; background: #23869a; }
.teams { position: absolute; left: 33px; top: -12px; width: 41px; height: 40px; border-radius: 50%; background: #5135ab; color: #d8cff0; font-size: 22px; line-height: 40px; text-align: center; }
.ij { font: 700 20px "Liberation Mono", monospace; fill: #fff; }
.wd { font: 700 24px "Liberation Sans", sans-serif; fill: #fff; }
.pp { font: 700 26px "Liberation Sans", sans-serif; fill: #fff; }

.tray { margin-left: auto; height: 116px; display: flex; align-items: center; padding-right: 49px; }
.t-caret { width: 27px; height: 16px; }
.t-cloud { width: 42px; height: 36px; margin-left: 46px; }
.t-wifi { width: 42px; height: 28px; margin-left: 38px; }
.t-vol { width: 40px; height: 36px; margin-left: 18px; }
.t-batt { width: 42px; height: 34px; margin-left: 20px; }
.clock { width: 161px; display: flex; flex-direction: column; align-items: flex-end; font-size: 29px; line-height: 40px; color: #111; white-space: nowrap; }
.t-bell { width: 37px; height: 38px; margin-left: 22px; }
```
